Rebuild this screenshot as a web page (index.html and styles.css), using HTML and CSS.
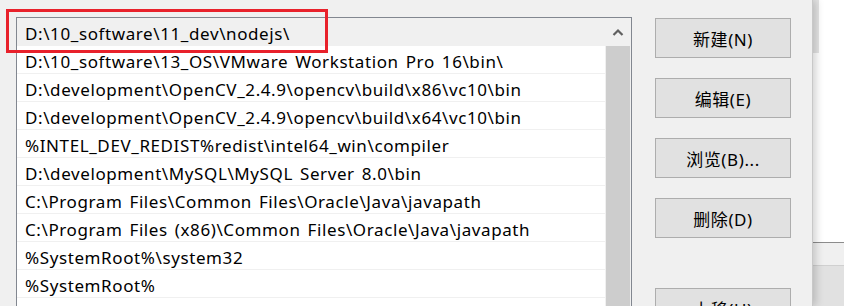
FILE: index.html
```html
<!DOCTYPE html>
<html>
  <head>
    <meta charset="utf-8" />
    <link rel="stylesheet" href="styles.css">
  </head>
  <body>
    <div class="page">
      <div class="dialog">
        <div class="listbox">
          <div class="highlight"></div>
          <ul class="paths">
            <li class="selected">D:\10_software\11_dev\nodejs\</li>
            <li>D:\10_software\13_OS\VMware Workstation Pro 16\bin\</li>
            <li>D:\development\OpenCV_2.4.9\opencv\build\x86\vc10\bin</li>
            <li>D:\development\OpenCV_2.4.9\opencv\build\x64\vc10\bin</li>
            <li>%INTEL_DEV_REDIST%redist\intel64_win\compiler</li>
            <li>D:\development\MySQL\MySQL Server 8.0\bin</li>
            <li>C:\Program Files\Common Files\Oracle\Java\javapath</li>
            <li>C:\Program Files (x86)\Common Files\Oracle\Java\javapath</li>
            <li>%SystemRoot%\system32</li>
            <li>%SystemRoot%</li>
          </ul>
          <div class="scrollbar">
            <div class="arrow">
              <svg width="12" height="8" viewBox="0 0 12 8">
                <path d="M1.5 7 L6 2.5 L10.5 7" fill="none" stroke="#606060" stroke-width="2.2" />
              </svg>
            </div>
            <div class="thumb"></div>
          </div>
        </div>

        <div class="buttons">
          <button class="btn">新建(N)</button>
          <button class="btn">编辑(E)</button>
          <button class="btn">浏览(B)...</button>
          <button class="btn">删除(D)</button>
          <button class="btn btn-gap">上移(U)</button>
        </div>
      </div>

      <div class="behind">
        <div class="behind-top"></div>
        <div class="behind-space"></div>
        <div class="behind-bar"></div>
        <div class="behind-btn"></div>
      </div>
    </div>
  </body>
</html>
```

FILE: styles.css
```css
* {
  box-sizing: border-box;
}

body {
  margin: 0;
  background-color: #ffffff;
  font-family: "Noto Sans", "Noto Sans CJK SC", sans-serif;
  font-size: 17px;
  color: #000000;
}

.page {
  display: flex;
  width: 844px;
  height: 306px;
  overflow: hidden;
}

.dialog {
  position: relative;
  display: flex;
  align-items: flex-start;
  width: 813px;
  flex-shrink: 0;
  padding: 17px 0 0 16px;
  background-color: #f0f0f0;
  border-right: 1px solid #c8c8c8;
  box-shadow: 3px 0 8px rgba(0, 0, 0, 0.18);
  z-index: 1;
}

.listbox {
  position: relative;
  display: flex;
  width: 616px;
  height: 320px;
  border: 1px solid #828790;
  border-bottom: none;
  background-color: #ffffff;
}

/* red marker drawn over the first entry */
.highlight {
  position: absolute;
  left: -11px;
  top: -9px;
  width: 322px;
  height: 44px;
  border: 3px solid #e8212b;
  z-index: 2;
}

.paths {
  list-style: none;
  margin: 0;
  padding: 0;
  width: 588px;
}

.paths li {
  height: 28px;
  padding: 3px 0 0 8px;
  line-height: 25px;
  letter-spacing: 0.6px;
  word-spacing: 2px;
  border-bottom: 1px solid #f0f0f0;
  white-space: nowrap;
}

.paths li.selected {
  background-color: #f0f0f0;
}

.scrollbar {
  width: 26px;
  display: flex;
  flex-direction: column;
  background-color: #f0f0f0;
}

.arrow {
  height: 28px;
  display: flex;
  align-items: center;
  justify-content: center;
}

.thumb {
  flex: 1;
  margin: 0 1px;
  background-color: #cdcdcd;
}

.buttons {
  display: flex;
  flex-direction: column;
  gap: 20px;
  margin-left: 23px;
  margin-top: 1px;
}

.btn {
  width: 136px;
  height: 40px;
  flex-shrink: 0;
  padding: 0;
  font-family: "Noto Sans", "Noto Sans CJK SC", sans-serif;
  font-size: 17px;
  letter-spacing: 0.6px;
  color: #000000;
  background-color: #e1e1e1;
  border: 1px solid #adadad;
}

.btn-gap {
  margin-top: 30px;
}

.behind {
  flex: 1;
  display: flex;
  flex-direction: column;
}

.behind-top {
  height: 53px;
  width: 6px;
  background-color: #e4e4e4;
}

.behind-space {
  height: 189px;
}

.behind-bar {
  height: 23px;
  border-top: 1px solid #8c8c8c;
  background-color: #f0f0f0;
}

.behind-btn {
  flex: 1;
  border-top: 1px solid #d0d0d0;
  background-color: #e1e1e1;
}
```
